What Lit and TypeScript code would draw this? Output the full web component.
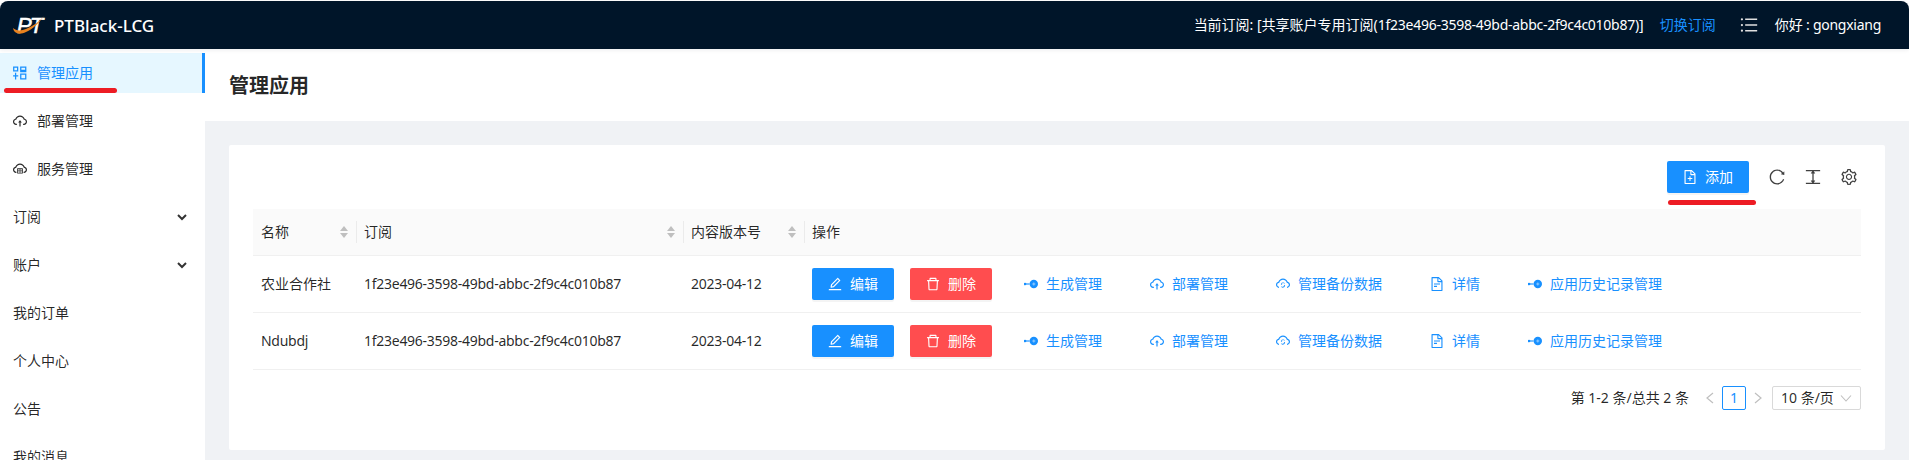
import { LitElement, html, css, svg } from "lit";
import { customElement } from "lit/decorators.js";

const ic = (body: unknown, size = 14, cls = "") =>
  html`<svg class=${cls} width=${size} height=${size} viewBox="64 64 896 896" fill="currentColor">${body}</svg>`;

const cloudUp = svg`<path d="M518.3 459a8 8 0 0 0-12.6 0l-112 141.7a7.98 7.98 0 0 0 6.3 12.9h73.9V856c0 4.4 3.6 8 8 8h60c4.4 0 8-3.6 8-8V613.700h74.100c6.700 0 10.400-7.700 6.300-12.900L518.300 459z"/><path d="M811.400 366.700C765.600 245.900 648.900 160 512.200 160S258.800 245.800 213 366.600C127.300 389.100 64 467.200 64 560c0 110.500 89.500 200 199.900 200H304c4.400 0 8-3.600 8-8v-60c0-4.400-3.600-8-8-8h-40.100c-33.700 0-65.400-13.400-89-37.700-23.500-24.200-36-56.800-34.900-90.600.9-26.400 9.900-51.200 26.200-72.100 16.700-21.300 40.100-36.800 66.100-43.700l37.900-9.900 13.900-36.600c8.600-22.800 20.600-44.100 35.700-63.400a245.600 245.600 0 0 1 52.400-49.900c41.100-28.900 89.500-44.200 140-44.200s98.900 15.300 140 44.200c19.900 14 37.500 30.800 52.400 49.900 15.100 19.300 27.100 40.600 35.700 63.400l13.800 36.500 37.800 10C846.100 454.500 884 503.800 884 560c0 33.100-12.900 64.300-36.300 87.700a123.070 123.070 0 0 1-87.600 36.300H720c-4.400 0-8 3.600-8 8v60c0 4.400 3.600 8 8 8h40.100C870.500 760 960 670.500 960 560c0-92.700-63.100-170.700-148.600-193.300z"/>`;
const cloudSync = svg`<path d="M811.400 368.900C765.600 248 648.900 162 512.200 162S258.800 247.900 213 368.800C126.900 391.500 63.500 470.200 64 563.600 64.600 668 145.600 752.900 247.600 762c4.700.4 8.700-3.300 8.700-8v-60.400c0-4-3-7.400-7-7.900-27-3.400-52.500-15.200-72.100-34.500-24-23.500-37.200-55.100-37.200-88.600 0-28 9.100-54.400 26.200-76.400 16.700-21.400 40.200-36.900 66.100-43.700l37.900-10 13.900-36.700c8.600-22.800 20.600-44.200 35.700-63.500 14.900-19.200 32.600-36 52.400-50 41.100-28.900 89.500-44.200 140-44.200s98.900 15.300 140 44.300c19.900 14 37.500 30.800 52.400 50 15.100 19.300 27.100 40.700 35.700 63.500l13.800 36.600 37.800 10c54.200 14.400 92.100 63.700 92.100 120 0 33.600-13.200 65.100-37.200 88.600-19.500 19.200-44.900 31.100-71.900 34.500-4 .5-6.900 3.900-6.900 7.900V754c0 4.700 4.100 8.400 8.800 8C879 752.900 960 668 960 563.600c0-93-63.100-171.100-148.600-194.700z"/><path d="M512 420a130 130 0 0 0-125 94l-18 0 48 66 48-66-18 0a80 80 0 0 1 143-26l38-30a130 130 0 0 0-116-38zM607 560l-48 66 18 0a80 80 0 0 1-143 26l-38 30a130 130 0 0 0 241-56l18 0z"/>`;
const serviceCloud = svg`<path d="M811.400 366.700C765.600 245.900 648.900 160 512.200 160S258.800 245.800 213 366.600C127.300 389.100 64 467.200 64 560c0 110.500 89.500 200 199.900 200H280v-76h-16c-66 0-124-58-124-124 0-56 38-105 92-119l38-10 14-36.600C314 300 406 236 512 236s198 64 228 158.400l14 36.600 38 10c54 14 92 63 92 119 0 66-58 124-124 124h-16v76h16c110 0 200-90 200-200 0-92.700-63-170.700-148.600-193.300z"/><path d="M352 470h320c11 0 20 9 20 20v290c0 11-9 20-20 20H352c-11 0-20-9-20-20V490c0-11 9-20 20-20zm36 56v82h248v-82zm0 134v84h248v-84zM480 540h64v54h-64zM480 674h64v56h-64z"/>`;
const nodeLink = svg`<circle cx="690" cy="512" r="270"/><rect x="590" y="480" width="200" height="64" fill="#8cc8ff"/><rect x="650" y="420" width="80" height="184" fill="#8cc8ff"/><rect x="100" y="476" width="320" height="72"/><circle cx="130" cy="512" r="85"/>`;
const fileText = svg`<path d="M854.600 288.600 639.400 73.400c-6-6-14.100-9.400-22.600-9.400H192c-17.700 0-32 14.300-32 32v832c0 17.700 14.300 32 32 32h640c17.700 0 32-14.300 32-32V311.300c0-8.500-3.400-16.700-9.400-22.700zM790.200 326H602V137.800L790.200 326zm1.800 562H232V136h302v216a42 42 0 0 0 42 42h216v494z"/><path d="M320 472h384v72H320zM320 624h190v72H320z"/>`;
const fileAdd = svg`<path d="M854.600 288.600 639.400 73.400c-6-6-14.100-9.400-22.600-9.400H192c-17.700 0-32 14.300-32 32v832c0 17.700 14.300 32 32 32h640c17.700 0 32-14.300 32-32V311.300c0-8.500-3.400-16.700-9.400-22.700zM790.200 326H602V137.800L790.200 326zm1.800 562H232V136h302v216a42 42 0 0 0 42 42h216v494zM544 472c0-4.400-3.600-8-8-8h-48c-4.400 0-8 3.600-8 8v108H372c-4.400 0-8 3.600-8 8v48c0 4.400 3.600 8 8 8h108v108c0 4.400 3.600 8 8 8h48c4.400 0 8-3.600 8-8V644h108c4.400 0 8-3.600 8-8v-48c0-4.400-3.600-8-8-8H544V472z"/>`;
const edit = svg`<path d="M257.700 752c2 0 4-.2 6-.5L431.900 722c2-.4 3.900-1.300 5.300-2.800l423.900-423.900a9.960 9.960 0 0 0 0-14.100L694.900 114.900c-1.900-1.900-4.400-2.900-7.100-2.900s-5.200 1-7.100 2.900L256.800 538.800c-1.500 1.500-2.400 3.300-2.800 5.300l-29.500 168.200a33.500 33.500 0 0 0 9.400 29.800c6.600 6.400 14.900 9.900 23.800 9.900zm67.400-174.400L687.800 215l73.300 73.300-362.700 362.600-88.900 15.700 15.600-89zM880 836H144c-17.700 0-32 14.300-32 32v36c0 4.400 3.600 8 8 8h784c4.400 0 8-3.600 8-8v-36c0-17.700-14.300-32-32-32z"/>`;
const del = svg`<path d="M360 184h-8c4.400 0 8-3.600 8-8v8h304v-8c0 4.400 3.600 8 8 8h-8v72h72v-80c0-35.300-28.700-64-64-64H352c-35.300 0-64 28.700-64 64v80h72v-72zm504 72H160c-17.700 0-32 14.300-32 32v32c0 4.400 3.600 8 8 8h60.400l24.700 523c1.600 34.100 29.800 61 63.900 61h454c34.200 0 62.300-26.800 63.900-61l24.700-523H888c4.400 0 8-3.600 8-8v-32c0-17.700-14.300-32-32-32zM731.300 840H292.700l-24.200-512h487l-24.200 512z"/>`;
const apps = svg`<path fill-rule="evenodd" d="M70 90h330v330H70zm80 80v170h170V170zM520 90h400v370H520zm80 80v130h240V170zM520 540h400v390H520zm80 80v230h240V620zM190 500h80v150h130v80H270v200h-80V730H70v-80h120z"/>`;
const reload = svg`<path d="M909.100 209.300l-56.400 44.100C775.800 155.100 656.200 92 521.900 92 290 92 102.300 279.500 102 511.500 101.700 743.700 289.800 932 521.900 932c181.300 0 335.800-115 394.600-276.100 1.500-4.200-.7-8.900-4.900-10.300l-56.700-19.500a8 8 0 0 0-10.100 4.800c-1.800 5-3.800 10-5.900 14.900-17.300 41-42.100 77.800-73.700 109.400A344.770 344.770 0 0 1 655.900 829c-42.300 17.900-87.400 27-133.800 27-46.500 0-91.500-9.100-133.800-27A341.500 341.500 0 0 1 279 755.200a342.160 342.160 0 0 1-73.700-109.400c-17.900-42.400-27-87.400-27-133.900s9.100-91.500 27-133.900c17.300-41 42.100-77.800 73.700-109.400 31.600-31.600 68.400-56.400 109.300-73.800 42.300-17.900 87.400-27 133.800-27 46.500 0 91.500 9.100 133.800 27a341.500 341.500 0 0 1 109.300 73.800c9.900 9.900 19.200 20.400 27.800 31.400l-60.200 47a8 8 0 0 0 3 14.100l175.600 43c5 1.200 9.900-2.600 9.900-7.700l.8-180.900c-.1-6.600-7.800-10.300-13-6.200z"/>`;
const colHeight = svg`<path d="M904 120H120c-4.400 0-8 3.600-8 8v56c0 4.400 3.600 8 8 8h784c4.400 0 8-3.600 8-8v-56c0-4.400-3.600-8-8-8zM904 832H120c-4.400 0-8 3.600-8 8v56c0 4.400 3.600 8 8 8h784c4.400 0 8-3.600 8-8v-56c0-4.400-3.600-8-8-8zM548 310h80a8 8 0 0 0 6.300-12.900l-116-148a8 8 0 0 0-12.600 0l-116 148A8 8 0 0 0 396 310h80v404h-80a8 8 0 0 0-6.300 12.900l116 148a8 8 0 0 0 12.600 0l116-148A8 8 0 0 0 628 714h-80V310z"/>`;
const gear = svg`<path d="M924.800 625.700l-65.500-56c3.100-19 4.700-38.400 4.700-57.800s-1.600-38.800-4.700-57.800l65.500-56a32.030 32.030 0 0 0 9.300-35.200l-.9-2.600a443.740 443.740 0 0 0-79.700-137.900l-1.800-2.100a32.120 32.120 0 0 0-35.100-9.500l-81.300 28.900c-30-24.600-63.500-44-99.700-57.600l-15.700-85a32.050 32.050 0 0 0-25.800-25.700l-2.700-.5c-52.100-9.400-106.900-9.400-159 0l-2.700.5a32.050 32.050 0 0 0-25.800 25.700l-15.800 85.400a351.860 351.860 0 0 0-99 57.400l-81.900-29.100a32 32 0 0 0-35.100 9.500l-1.800 2.100a446.020 446.020 0 0 0-79.700 137.900l-.9 2.600c-4.500 12.500-.8 26.500 9.300 35.200l66.300 56.600c-3.100 18.800-4.600 38-4.600 57.100 0 19.200 1.500 38.400 4.600 57.100L99 625.500a32.030 32.030 0 0 0-9.300 35.200l.9 2.600c18.100 50.400 44.900 96.900 79.700 137.900l1.800 2.100a32.120 32.120 0 0 0 35.100 9.500l81.900-29.100c29.800 24.500 63.100 43.900 99 57.400l15.800 85.400a32.050 32.050 0 0 0 25.800 25.700l2.700.5a449.400 449.400 0 0 0 159 0l2.700-.5a32.050 32.050 0 0 0 25.800-25.700l15.700-85a350 350 0 0 0 99.700-57.600l81.300 28.900a32 32 0 0 0 35.100-9.500l1.800-2.100c34.800-41.100 61.600-87.500 79.700-137.900l.9-2.600c4.500-12.300.8-26.300-9.300-35zM788.300 465.900c2.500 15.100 3.800 30.600 3.800 46.100s-1.300 31-3.800 46.100l-6.600 40.100 74.700 63.900a370.030 370.030 0 0 1-42.600 73.600L721 702.800l-31.400 25.800c-23.900 19.600-50.500 35-79.300 45.800l-38.100 14.300-17.900 97a377.500 377.500 0 0 1-85 0l-17.900-97.200-37.800-14.500c-28.500-10.800-55-26.200-78.700-45.700l-31.400-25.900-93.400 33.200c-17-22.900-31.200-47.600-42.600-73.600l75.500-64.500-6.500-40c-2.400-14.900-3.700-30.300-3.700-45.500 0-15.300 1.200-30.600 3.700-45.500l6.500-40-75.500-64.500c11.300-26.100 25.600-50.700 42.600-73.600l93.400 33.200 31.400-25.900c23.700-19.500 50.200-34.900 78.700-45.700l37.900-14.300 17.900-97.200c28.100-3.200 56.800-3.200 85 0l17.900 97 38.100 14.300c28.700 10.800 55.400 26.200 79.300 45.800l31.400 25.800 92.800-32.900c17 22.900 31.200 47.600 42.600 73.600L781.800 426l6.500 39.900zM512 326c-97.200 0-176 78.800-176 176s78.800 176 176 176 176-78.800 176-176-78.800-176-176-176zm79.200 255.200A111.600 111.600 0 0 1 512 614c-29.900 0-58-11.700-79.200-32.800A111.600 111.600 0 0 1 400 502c0-29.900 11.700-58 32.800-79.200C454 401.600 482.100 390 512 390c29.900 0 58 11.600 79.200 32.800A111.600 111.600 0 0 1 624 502c0 29.900-11.700 58-32.800 79.200z"/>`;
const bars = svg`<path d="M912 192H328c-4.400 0-8 3.600-8 8v56c0 4.400 3.600 8 8 8h584c4.400 0 8-3.600 8-8v-56c0-4.400-3.600-8-8-8zm0 284H328c-4.400 0-8 3.600-8 8v56c0 4.400 3.600 8 8 8h584c4.400 0 8-3.600 8-8v-56c0-4.400-3.600-8-8-8zm0 284H328c-4.400 0-8 3.600-8 8v56c0 4.400 3.600 8 8 8h584c4.400 0 8-3.600 8-8v-56c0-4.400-3.600-8-8-8zM104 228a56 56 0 1 0 112 0 56 56 0 1 0-112 0zm0 284a56 56 0 1 0 112 0 56 56 0 1 0-112 0zm0 284a56 56 0 1 0 112 0 56 56 0 1 0-112 0z"/>`;

const SUB = "1f23e496-3598-49bd-abbc-2f9c4c010b87";
const ROWS = [
  { name: "农业合作社", sub: SUB, ver: "2023-04-12", lat: false },
  { name: "Ndubdj", sub: SUB, ver: "2023-04-12", lat: true },
];

const l = (s: string, lat = false) => html`<span class="l ${lat ? "lat" : ""}">${s}</span>`;

@customElement("app-root")
export class AppRoot extends LitElement {
  static styles = css`
    :host { display: block; width: 1909px; height: 460px; overflow: hidden; background: #fff;
      font-family: "Noto Sans", "Noto Sans CJK SC", sans-serif; font-size: 14px; color: rgba(0,0,0,.85); position: relative; }
    svg { display: block; flex: none; }
    .l { margin-bottom: 2px; }
    .lat { letter-spacing: -.27px; }
    .top { height: 48px; margin-top: 1px; background: #001529; color: #fff; border-radius: 8px 8px 0 0; display: flex; align-items: center; padding: 0 28px 0 13px; box-shadow: 0 1px 4px rgba(0,21,41,.08); position: relative; }
    .brand { font-size: 17px; font-weight: 500; margin-left: 9px; }
    .spacer { flex: 1; }
    .switch { color: #1890ff; margin-left: 16px; }
    .bars { margin-left: 24px; color: #e0e0e0; }
    .hello { margin-left: 17px; }
    .main { display: flex; height: 411px; }
    .side { width: 205px; flex: none; background: #fff; padding-top: 4px; box-sizing: border-box; }
    .mi { height: 40px; margin-bottom: 8px; display: flex; align-items: center; padding: 0 18px 0 13px; gap: 10px; color: rgba(0,0,0,.85); }
    .mi.on { background: #e6f7ff; color: #1890ff; border-right: 3px solid #1890ff; }
    .mi .chev { margin-left: auto; }
    .content { flex: 1; background: #f0f2f5; display: flex; flex-direction: column; min-width: 0; }
    .head { height: 72px; flex: none; background: #fff; display: flex; align-items: center; padding: 0 24px; font-size: 20px; font-weight: 600; }
    .card { flex: none; margin: 24px 24px 0; background: #fff; border-radius: 2px; height: 305px; padding: 16px 24px; box-sizing: border-box; }
    .tools { display: flex; justify-content: flex-end; align-items: center; height: 32px; margin-bottom: 16px; color: rgba(0,0,0,.75); padding-right: 4px; }
    .btn { height: 32px; width: 82px; border-radius: 2px; color: #fff; background: #1890ff; display: flex; align-items: center; justify-content: center; gap: 8px; box-shadow: 0 2px 0 rgba(0,0,0,.045); }
    .btn.red { background: #ff4d4f; }
    .tools .t { margin-left: 20px; }
    .table { display: grid; grid-template-columns: 103px 327px 121px 1fr; }
    .th { height: 46px; background: #fafafa; border-bottom: 1px solid #f0f0f0; display: flex; align-items: center; padding: 0 8px; position: relative; justify-content: space-between; }
    .th + .th::before { content: ""; position: absolute; left: 0; top: 12px; bottom: 12px; width: 1px; background: #ebebeb; }
    .sorter { display: flex; flex-direction: column; gap: 2px; }
    .sorter i { display: block; width: 0; height: 0; border-left: 4px solid transparent; border-right: 4px solid transparent; }
    .sorter i:first-child { border-bottom: 5px solid #bfbfbf; }
    .sorter i:last-child { border-top: 5px solid #bfbfbf; }
    .td { height: 56px; border-bottom: 1px solid #f0f0f0; display: flex; align-items: center; padding: 0 8px; }
    .actions { gap: 16px; }
    .links { display: flex; gap: 16px; }
    .link { display: flex; align-items: center; gap: 8px; color: #1890ff; padding: 0 16px; }
    .pager { display: flex; align-items: center; justify-content: flex-end; height: 24px; margin-top: 16px; }
    .pager .total { margin-right: 17px; }
    .arrow { color: #bfbfbf; }
    .pg { width: 24px; height: 24px; box-sizing: border-box; border: 1px solid #1890ff; border-radius: 2px; color: #1890ff; display: flex; align-items: center; justify-content: center; margin: 0 8px; }
    .sel { margin-left: 10px; width: 89px; height: 24px; box-sizing: border-box; border: 1px solid #d9d9d9; border-radius: 2px; display: flex; align-items: center; justify-content: space-between; padding: 0 8px; }
    .mark { position: absolute; background: #ed1c24; border-radius: 3px; height: 5px; }
    .m1 { left: 4px; top: 88px; width: 113px; }
    .m2 { left: 1668px; top: 200px; width: 88px; }
    .logo { overflow: visible; }
  `;

  chevDown(color = "currentColor", w = 10) {
    return html`<svg class="chev" width=${w} height=${w} viewBox="0 0 10 10" fill="none" stroke=${color} stroke-width="2"><path d="M1 3l4 4 4-4"/></svg>`;
  }

  item(label: string, icon?: unknown, extra = "") {
    return html`<div class="mi ${extra === "on" ? "on" : ""}">${icon ? ic(icon, 14) : ""}${l(label)}${extra === "sub" ? this.chevDown("rgba(0,0,0,.8)") : ""}</div>`;
  }

  sorter() {
    return html`<span class="sorter"><i></i><i></i></span>`;
  }

  link(icon: unknown, label: string) {
    return html`<span class="link">${ic(icon, 14)}${l(label)}</span>`;
  }

  render() {
    return html`
      <div class="top">
        <svg class="logo" width="32" height="22" viewBox="0 0 32 22">
          <text x="4" y="19" font-family="Liberation Sans" font-size="22" font-weight="400" font-style="italic" stroke="#fff" stroke-width=".6" letter-spacing="-2" fill="#fff">PT</text>
          <path d="M0 14c1 6 7 7 13 4 7-3 13-9 18-16-5 6-11 10-18 13-5 2-10 2-13-1z" fill="#e8821e"/>
        </svg>
        <span class="brand">PTBlack-LCG</span>
        <span class="spacer"></span>
        <span class="sub l">当前订阅: [共享账户专用订阅(<span class="lat">${SUB}</span>)]</span>
        <span class="switch l">切换订阅</span>
        <span class="bars">${ic(bars, 18)}</span>
        <span class="hello l">你好<span class="lat"> : gongxiang</span></span>
      </div>
      <div class="main">
        <div class="side">
          ${this.item("管理应用", apps, "on")}
          ${this.item("部署管理", cloudUp)}
          ${this.item("服务管理", serviceCloud)}
          ${this.item("订阅", undefined, "sub")}
          ${this.item("账户", undefined, "sub")}
          ${this.item("我的订单")}
          ${this.item("个人中心")}
          ${this.item("公告")}
          ${this.item("我的消息")}
        </div>
        <div class="content">
          <div class="head">${l("管理应用")}</div>
          <div class="card">
            <div class="tools">
              <span class="btn">${ic(fileAdd, 14)}${l("添加")}</span>
              <span class="t">${ic(reload, 16)}</span>
              <span class="t">${ic(colHeight, 16)}</span>
              <span class="t">${ic(gear, 16)}</span>
            </div>
            <div class="table">
              <div class="th">${l("名称")}${this.sorter()}</div>
              <div class="th">${l("订阅")}${this.sorter()}</div>
              <div class="th">${l("内容版本号")}${this.sorter()}</div>
              <div class="th">${l("操作")}</div>
              ${ROWS.map(
                (r) => html`
                  <div class="td">${l(r.name, r.lat)}</div>
                  <div class="td">${l(r.sub, true)}</div>
                  <div class="td">${l(r.ver, true)}</div>
                  <div class="td actions">
                    <span class="btn">${ic(edit, 14)}${l("编辑")}</span>
                    <span class="btn red">${ic(del, 14)}${l("删除")}</span>
                    <span class="links">
                      ${this.link(nodeLink, "生成管理")}
                      ${this.link(cloudUp, "部署管理")}
                      ${this.link(cloudSync, "管理备份数据")}
                      ${this.link(fileText, "详情")}
                      ${this.link(nodeLink, "应用历史记录管理")}
                    </span>
                  </div>
                `
              )}
            </div>
            <div class="pager">
              <span class="total l">第 1-2 条/总共 2 条</span>
              <svg class="arrow" width="8" height="12" viewBox="0 0 8 12" fill="none" stroke="currentColor" stroke-width="1.2"><path d="M7 1L1 6l6 5"/></svg>
              <span class="pg">${l("1")}</span>
              <svg class="arrow" width="8" height="12" viewBox="0 0 8 12" fill="none" stroke="currentColor" stroke-width="1.2"><path d="M1 1l6 5-6 5"/></svg>
              <span class="sel">${l("10 条/页")}<svg width="12" height="12" viewBox="0 0 12 12" fill="none" stroke="#bfbfbf" stroke-width="1.1"><path d="M1 3.500l5 5.500 5-5.500"/></svg></span>
            </div>
          </div>
        </div>
      </div>
      <div class="mark m1"></div>
      <div class="mark m2"></div>
    `;
  }
}
